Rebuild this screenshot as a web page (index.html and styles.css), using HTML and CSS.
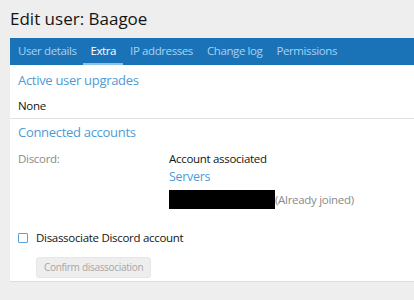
FILE: index.html
```html
<!DOCTYPE html>
<html>
<head>
<meta charset="utf-8">
<link rel="stylesheet" href="styles.css">
</head>
<body>
<h1 class="title">Edit user: Baagoe</h1>
<div class="panel">
  <div class="tabs">
    <span class="tab">User details</span>
    <span class="tab active">Extra</span>
    <span class="tab">IP addresses</span>
    <span class="tab">Change log</span>
    <span class="tab">Permissions</span>
  </div>
  <div class="section">
    <h2 class="heading">Active user upgrades</h2>
    <div class="none">None</div>
  </div>
  <div class="section last">
    <h2 class="heading">Connected accounts</h2>
    <div class="row">
      <div class="label">Discord:</div>
      <div class="value">
        <div>Account associated</div>
        <div class="link">Servers</div>
        <div class="server"><span class="redact"></span><span class="joined">(Already joined)</span></div>
      </div>
    </div>
    <label class="check"><span class="box"></span>Disassociate Discord account</label>
    <div class="btnrow"><span class="button">Confirm disassociation</span></div>
  </div>
</div>
</body>
</html>
```
FILE: styles.css
```css
html, body { margin: 0; padding: 0; }
body {
  background: #eeeeee;
  font-family: "Open Sans", "Noto Sans", sans-serif;
  color: #141414;
  padding: 0 0 0 10px;
  height: 300px;
  overflow: hidden;
}
.title {
  margin: 0;
  padding: 7px 0 0 0;
  height: 31px;
  font-size: 17px;
  font-weight: 400;
  line-height: 24px;
  color: #141414;
}
.panel {
  background: #fff;
  border-bottom: 1px solid #dcdcdc;
}
.tabs {
  background: #1b73b7;
  height: 27px;
  display: flex;
  padding-left: 1px;
  font-size: 11.5px;
  letter-spacing: -0.4px;
}
.tab {
  color: #a9d1f2;
  padding: 0 7px;
  line-height: 25px;
  border-bottom: 2px solid transparent;
}
.tab.active {
  color: #fff;
  border-bottom-color: #8cc2ea;
}
.section {
  border-bottom: 1px solid #e3e3e3;
}
.section.last { border-bottom: 0; padding-bottom: 0; }
.heading {
  margin: 0;
  font-size: 13px;
  font-weight: 400;
  letter-spacing: -0.3px;
  color: #4e9bd6;
  padding: 6px 8px 0;
  line-height: 18px;
  height: 23px;
  box-sizing: border-box;
}
.last .heading { padding-top: 4px; }
.none {
  font-size: 11.5px;
  padding: 0 8px;
  line-height: 18px;
  margin: 9px 0 3px;
  letter-spacing: -0.3px;
}
.row {
  display: flex;
  padding: 8px 8px 0;
  font-size: 11.5px;
  letter-spacing: -0.3px;
  line-height: 17px;
}
.label { width: 151px; color: #8a8a8a; }
.value { color: #141414; }
.link { color: #4e9bd6; font-size: 12.5px; line-height: 19px; }
.server { display: flex; align-items: center; margin-top: 4px; }
.redact { display: inline-block; width: 106px; height: 19px; background: #000; }
.joined { color: #8a8a8a; }
.check {
  display: flex;
  align-items: center;
  font-size: 11.5px;
  letter-spacing: -0.3px;
  padding: 20px 8px 0;
  line-height: 17px;
}
.box {
  width: 8px; height: 8px;
  border: 1px solid #5aa2dc;
  border-radius: 1px;
  margin-right: 8px;
}
.btnrow { padding: 11px 0 3px 26px; line-height: 0; }
.button {
  display: inline-block;
  background: #eeeeee;
  border: 1px solid #e6e6e6;
  border-radius: 3px;
  color: #a6a6a6;
  font-size: 10px;
  letter-spacing: -0.3px;
  line-height: 19px;
  padding: 0 7px;
}
```
